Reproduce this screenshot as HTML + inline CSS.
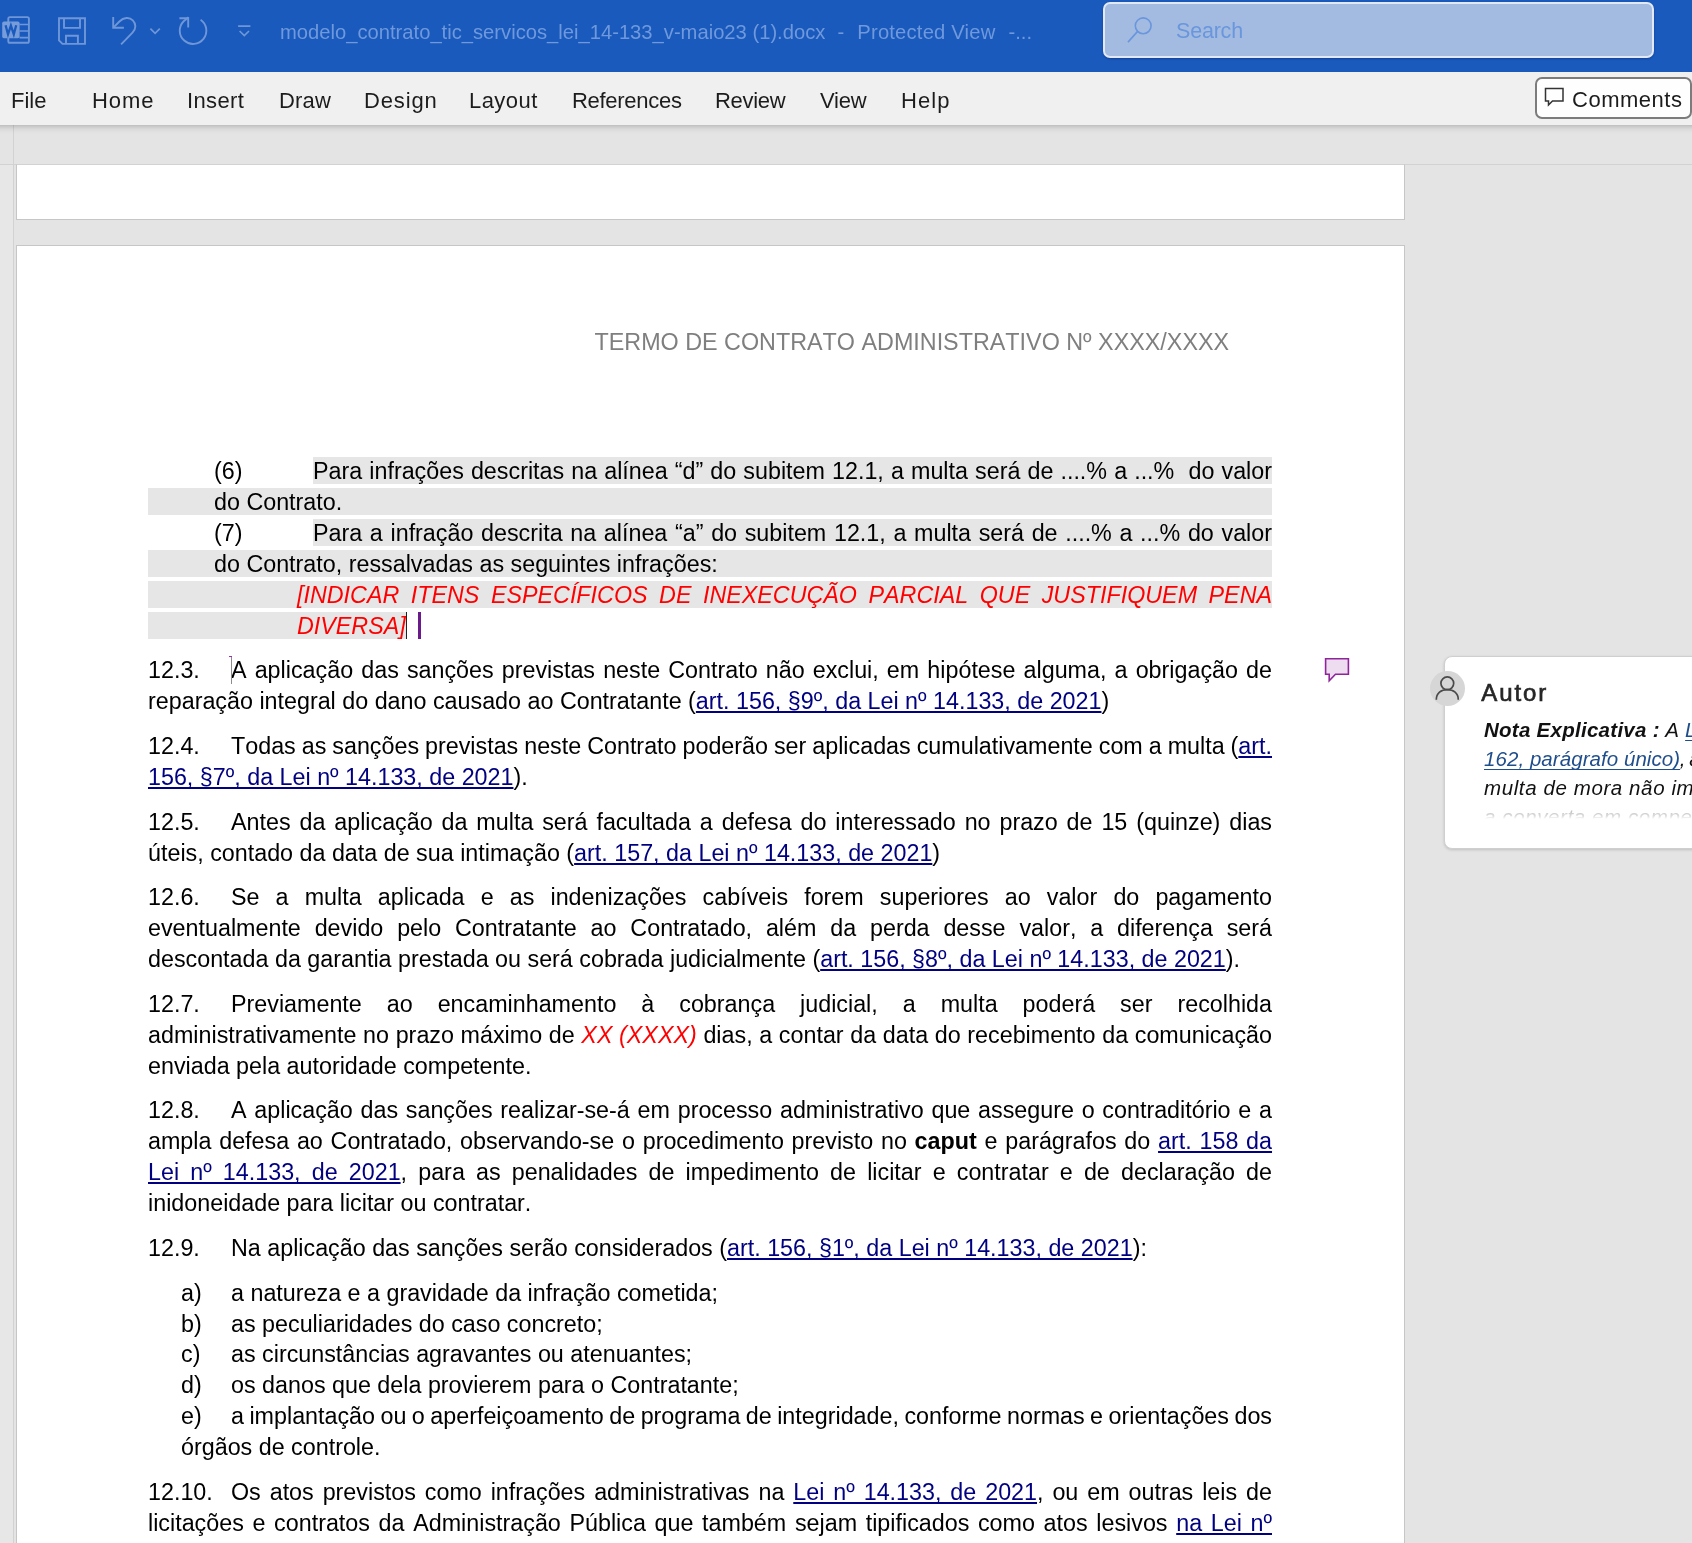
<!DOCTYPE html>
<html lang="pt-BR">
<head>
<meta charset="utf-8">
<title>modelo_contrato_tic_servicos_lei_14-133_v-maio23 (1).docx - Protected View - Word</title>
<style>
*{box-sizing:border-box;margin:0;padding:0}
html,body{width:1692px;height:1543px;overflow:hidden;background:#e4e4e4}
body{position:relative;font-family:"Liberation Sans",sans-serif;color:#000}
/* ---------- title bar ---------- */
#title{will-change:transform;position:absolute;left:0;top:0;width:1692px;height:72px;background:#1a5abd}
#title svg{position:absolute;overflow:visible}
#title .fn{position:absolute;top:17px;height:30px;line-height:30px;font-size:20.2px;color:#6f99dc;white-space:pre}
#search{position:absolute;left:1103px;top:2px;width:551px;height:56px;border-radius:7px;background:#a3bbe1;border:2px solid #e3e9f4;box-shadow:0 1px 2px rgba(0,10,60,.3)}
#search span{position:absolute;left:71px;top:11px;font-size:21.5px;letter-spacing:-.2px;line-height:32px;color:#6996dc}
/* ---------- ribbon ---------- */
#ribbon{position:absolute;left:0;top:72px;width:1692px;height:53px;background:#f0f0f0;z-index:5}
#rshadow{position:absolute;left:0;top:125px;width:1692px;height:11px;z-index:4;background:linear-gradient(to bottom,rgba(0,0,0,.165) 0,rgba(0,0,0,.13) 1px,rgba(0,0,0,.098) 2px,rgba(0,0,0,.07) 3px,rgba(0,0,0,.048) 4px,rgba(0,0,0,.032) 5px,rgba(0,0,0,.02) 6px,rgba(0,0,0,.011) 7px,rgba(0,0,0,.005) 8.500px,rgba(0,0,0,0) 10px)}
#ribbon .tab,#cbtn span{will-change:transform}
#ribbon .tab{position:absolute;top:13px;height:32px;line-height:32px;font-size:22px;color:#1c1c1c;white-space:nowrap}
#cbtn{position:absolute;left:1535px;top:5px;width:157px;height:42px;border:2px solid #7c7c7c;border-radius:7px;background:#fefefe}
#cbtn span{position:absolute;left:35px;top:5px;font-size:22px;letter-spacing:.52px;line-height:32px;color:#1c1c1c}
/* ---------- workspace ---------- */
#ws{position:absolute;left:0;top:125px;width:1692px;height:1418px;background:#e4e4e4}
#vr{position:absolute;left:0;top:164px;width:13px;height:1379px;background:#e7e7e7}
#vline{position:absolute;left:13px;top:125px;width:1px;height:1418px;background:#d2d2d2}
#hline{position:absolute;left:0;top:164px;width:1692px;height:1px;background:#d2d2d2}
.page{position:absolute;left:16px;width:1389px;background:#fff;border:1px solid #c6c6c6}
#p1{top:164px;height:56px;border-top-color:#d2d2d2}
#p2{top:245px;height:1320px}
/* ---------- document text ---------- */
#doc{position:absolute;left:0;top:0;width:1692px;height:1543px;will-change:transform}
.hdr{position:absolute;left:594.5px;top:327px;font-kerning:none;font-size:23.34px;line-height:31px;color:#7f7f7f;white-space:nowrap}
.ln{position:absolute;height:31px;line-height:31px;font-size:23.3px;white-space:pre-wrap;color:#000;font-kerning:none}
.j{text-align:justify;text-align-last:justify;word-spacing:-1.5px}
.t{display:inline-block;text-align:left;white-space:nowrap}
.r{color:#ff0000;font-style:italic}
.ln a{color:#000080;text-decoration:underline;text-decoration-thickness:2px;text-underline-offset:1.6px;text-decoration-skip-ink:none}
.band{position:absolute;height:27px;background:#e6e6e6}
/* ---------- comments ---------- */
#cm{position:absolute;left:0;top:0;width:1692px;height:1543px;will-change:transform}
#card{position:absolute;left:1443.5px;top:656px;width:300px;height:193px;background:#fff;border:1.5px solid #cfcfcf;border-radius:8px;box-shadow:0 1px 3px rgba(0,0,0,.16)}
#avatar{position:absolute;left:1429.5px;top:671px;width:35px;height:35px;border-radius:50%;background:#d6d6d6}
#autor{position:absolute;left:1481.2px;top:677px;font-size:24px;letter-spacing:1.95px;line-height:32px;color:#262626;-webkit-text-stroke:.65px #262626;white-space:nowrap}
.cl{position:absolute;left:1484px;height:29px;line-height:29px;font-size:20.5px;font-style:italic;color:#111;white-space:pre}
.cl a{color:#1f4e8c;text-decoration:underline;text-decoration-thickness:1.4px;text-underline-offset:3px;text-decoration-skip-ink:none}
#fade{position:absolute;left:1470px;top:806px;width:222px;height:36px;background:linear-gradient(to bottom,rgba(255,255,255,.35) 0,rgba(255,255,255,.75) 10px,#fff 13px,#fff 100%)}
</style>
</head>
<body>
<div id="ws"></div>
<div id="vr"></div><div id="vline"></div><div id="hline"></div>
<div class="page" id="p1"></div>
<div class="page" id="p2"></div>

<div id="doc">
<div class="band" style="left:313px;top:457px;width:959px"></div><div class="band" style="left:148px;top:488px;width:1124px"></div><div class="band" style="left:313px;top:519px;width:959px"></div><div class="band" style="left:148px;top:550px;width:1124px"></div><div class="band" style="left:148px;top:581px;width:1124px"></div><div class="band" style="left:148px;top:612px;width:259px"></div>
<div class="hdr">TERMO DE CONTRATO ADMINISTRATIVO Nº XXXX/XXXX</div>
<div class="ln j" style="top:456px;left:214px;width:1058px"><span class="t" style="width:99px">(6)</span>Para infrações descritas na alínea “d” do subitem 12.1, a multa será de ....% a ...%  do valor</div>
<div class="ln" style="top:487px;left:214px;width:1058px">do Contrato.</div>
<div class="ln j" style="top:518px;left:214px;width:1058px"><span class="t" style="width:99px">(7)</span>Para a infração descrita na alínea “a” do subitem 12.1, a multa será de ....% a ...% do valor</div>
<div class="ln" style="top:549px;left:214px;width:1058px">do Contrato, ressalvadas as seguintes infrações:</div>
<div class="ln j r" style="top:580px;left:297px;width:975px">[INDICAR ITENS ESPECÍFICOS DE INEXECUÇÃO PARCIAL QUE JUSTIFIQUEM PENA</div>
<div class="ln r" style="top:611px;left:297px;width:975px">DIVERSA]</div>
<div class="ln j" style="top:655px;left:148px;width:1124px"><span class="t" style="width:83px">12.3.</span>A aplicação das sanções previstas neste Contrato não exclui, em hipótese alguma, a obrigação de</div>
<div class="ln" style="top:686px;left:148px;width:1124px">reparação integral do dano causado ao Contratante (<a>art. 156, §9º, da Lei nº 14.133, de 2021</a>)</div>
<div class="ln j" style="top:731px;left:148px;width:1124px"><span class="t" style="width:83px">12.4.</span>Todas as sanções previstas neste Contrato poderão ser aplicadas cumulativamente com a multa (<a>art.</a></div>
<div class="ln" style="top:762px;left:148px;width:1124px"><a>156, §7º, da Lei nº 14.133, de 2021</a>).</div>
<div class="ln j" style="top:807px;left:148px;width:1124px"><span class="t" style="width:83px">12.5.</span>Antes da aplicação da multa será facultada a defesa do interessado no prazo de 15 (quinze) dias</div>
<div class="ln" style="top:838px;left:148px;width:1124px">úteis, contado da data de sua intimação (<a>art. 157, da Lei nº 14.133, de 2021</a>)</div>
<div class="ln j" style="top:882px;left:148px;width:1124px"><span class="t" style="width:83px">12.6.</span>Se a multa aplicada e as indenizações cabíveis forem superiores ao valor do pagamento</div>
<div class="ln j" style="top:913px;left:148px;width:1124px">eventualmente devido pelo Contratante ao Contratado, além da perda desse valor, a diferença será</div>
<div class="ln" style="top:944px;left:148px;width:1124px">descontada da garantia prestada ou será cobrada judicialmente (<a>art. 156, §8º, da Lei nº 14.133, de 2021</a>).</div>
<div class="ln j" style="top:989px;left:148px;width:1124px"><span class="t" style="width:83px">12.7.</span>Previamente ao encaminhamento à cobrança judicial, a multa poderá ser recolhida</div>
<div class="ln j" style="top:1020px;left:148px;width:1124px">administrativamente no prazo máximo de <i class="r">XX (XXXX)</i> dias, a contar da data do recebimento da comunicação</div>
<div class="ln" style="top:1051px;left:148px;width:1124px">enviada pela autoridade competente.</div>
<div class="ln j" style="top:1095px;left:148px;width:1124px"><span class="t" style="width:83px">12.8.</span>A aplicação das sanções realizar-se-á em processo administrativo que assegure o contraditório e a</div>
<div class="ln j" style="top:1126px;left:148px;width:1124px">ampla defesa ao Contratado, observando-se o procedimento previsto no <b>caput</b> e parágrafos do <a>art. 158 da</a></div>
<div class="ln j" style="top:1157px;left:148px;width:1124px"><a>Lei nº 14.133, de 2021</a>, para as penalidades de impedimento de licitar e contratar e de declaração de</div>
<div class="ln" style="top:1188px;left:148px;width:1124px">inidoneidade para licitar ou contratar.</div>
<div class="ln" style="top:1233px;left:148px;width:1124px"><span class="t" style="width:83px">12.9.</span>Na aplicação das sanções serão considerados (<a>art. 156, §1º, da Lei nº 14.133, de 2021</a>):</div>
<div class="ln" style="top:1278px;left:181px;width:1091px"><span class="t" style="width:50px">a)</span>a natureza e a gravidade da infração cometida;</div>
<div class="ln" style="top:1309px;left:181px;width:1091px"><span class="t" style="width:50px">b)</span>as peculiaridades do caso concreto;</div>
<div class="ln" style="top:1339px;left:181px;width:1091px"><span class="t" style="width:50px">c)</span>as circunstâncias agravantes ou atenuantes;</div>
<div class="ln" style="top:1370px;left:181px;width:1091px"><span class="t" style="width:50px">d)</span>os danos que dela provierem para o Contratante;</div>
<div class="ln j" style="top:1401px;left:181px;width:1091px"><span class="t" style="width:50px">e)</span>a implantação ou o aperfeiçoamento de programa de integridade, conforme normas e orientações dos</div>
<div class="ln" style="top:1432px;left:181px;width:1091px">órgãos de controle.</div>
<div class="ln j" style="top:1477px;left:148px;width:1124px"><span class="t" style="width:83px">12.10.</span>Os atos previstos como infrações administrativas na <a>Lei nº 14.133, de 2021</a>, ou em outras leis de</div>
<div class="ln j" style="top:1508px;left:148px;width:1124px">licitações e contratos da Administração Pública que também sejam tipificados como atos lesivos <a>na Lei nº</a></div>
</div>

<!-- caret + revision bar -->
<div style="position:absolute;left:406px;top:612px;width:1px;height:27px;background:#222"></div>
<div style="position:absolute;left:418px;top:612px;width:3px;height:27px;background:#6b1a8c"></div>
<div style="position:absolute;left:231px;top:657px;width:1px;height:27px;background:#8c8c8c"></div>
<div style="position:absolute;left:229px;top:656px;width:3px;height:1px;background:#9b2fae"></div>

<!-- comment marker in margin -->
<svg style="position:absolute;left:1320px;top:650px" width="40" height="40" viewBox="1320 650 40 40">
  <path d="M1325.600 658.700H1348.400V674.200H1335.500L1329.200 680.700V674.200H1325.600Z" fill="#eedcf0" stroke="#8f259b" stroke-width="1.600" stroke-linejoin="miter"/>
</svg>

<!-- comments pane -->
<div id="cm">
<div id="card"></div>
<div id="avatar"></div>
<svg style="position:absolute;left:1429.5px;top:671px" width="35" height="35" viewBox="0 0 35 35">
  <circle cx="17.3" cy="12.3" r="6.4" fill="none" stroke="#4a4a4a" stroke-width="1.7"/>
  <path d="M6.3 28.8c0-6.6 4.9-10.2 11-10.2s11 3.6 11 10.2" fill="none" stroke="#4a4a4a" stroke-width="1.7"/>
</svg>
<div id="autor">Autor</div>
<div class="cl" style="top:714.5px"><b style="letter-spacing:.27px">Nota Explicativa :</b><span style="letter-spacing:.6px"> A </span><a>Lei nº 14.133, de 2021 (art.</a></div>
<div class="cl" style="top:743.5px"><a style="letter-spacing:.06px">162, parágrafo único)</a><span style="margin-left:-.5px;letter-spacing:-.9px">, </span>ao estabelecer que a aplicação de</div>
<div class="cl" style="top:772.5px;letter-spacing:.6px">multa de mora não impedirá que a Administração</div>
<div class="cl" style="top:801.5px;letter-spacing:.6px;color:#777">a converta em compensatória e promova a extinção</div>
<div id="fade"></div>
</div>

<!-- title bar -->
<div id="title">
  <!-- quick access toolbar icons -->
  <svg style="left:0;top:0" width="270" height="72" viewBox="0 0 270 72" fill="none" stroke="#6f97d8" stroke-width="1.9">
    <!-- Word logo -->
    <rect x="8.300" y="17.100" width="20.600" height="25.700" rx="1.600"/>
    <path d="M19.500 24.500h9.400M19.500 31h9.400M19.500 37.600h9.400" stroke-width="1.700"/>
    <rect x="2.200" y="21.400" width="17.400" height="16.900" rx="1.800" fill="#769cda" stroke="none"/>
    <path d="M5.600 25.300l2.400 9 2.900-8.700 2.900 8.700 2.400-9" stroke="#1a5abd" stroke-width="2.300" stroke-linejoin="miter"/>
    <!-- save -->
    <path d="M59 18.200h26v25.700H62.500L59 40.400z"/>
    <path d="M64 18.200v9.700h16v-9.700"/>
    <path d="M66 43.900v-8.100h11.900v8.100"/>
    <!-- undo -->
    <path d="M113.200 17v10.700h10.700"/>
    <path d="M113.600 27.300l5.800-5.800c4.200-4.200 10-4.600 13.400-1.200 3.400 3.400 3.500 8.600-.3 12.400L121.100 44.300"/>
    <path d="M150.400 28.600l4.700 4.700 4.700-4.700" stroke-width="1.700"/>
    <!-- redo -->
    <path d="M200.600 19.700A13.300 13.300 0 1 1 183.700 21.200L188.500 17.300"/>
    <path d="M179.400 18.200h8.800v9.400"/>
    <!-- customize -->
    <path d="M238.100 26.200h12.300M239.600 31l4.700 4.500 4.700-4.500" stroke-width="1.700"/>
  </svg>
  <div class="fn" style="left:280px">modelo_contrato_tic_servicos_lei_14-133_v-maio23 (1).docx</div>
  <div class="fn" style="left:837.5px">-</div>
  <div class="fn" style="left:857.3px;letter-spacing:.2px">Protected View</div>
  <div class="fn" style="left:1008.5px">-...</div>
  <div id="search">
    <svg style="left:20px;top:8.200px" width="32" height="34" viewBox="0 0 32 34" fill="none" stroke="#6996dc" stroke-width="1.6">
      <circle cx="18.200" cy="13.800" r="7.900"/><path d="M12.600 19.400L3 30.100"/>
    </svg>
    <span>Search</span>
  </div>
</div>

<div id="rshadow"></div>
<!-- ribbon tabs -->
<div id="ribbon">
  <div class="tab" style="left:11px;letter-spacing:0px">File</div>
  <div class="tab" style="left:92px;letter-spacing:0.9px">Home</div>
  <div class="tab" style="left:187px;letter-spacing:0.35px">Insert</div>
  <div class="tab" style="left:279px;letter-spacing:0.2px">Draw</div>
  <div class="tab" style="left:364px;letter-spacing:0.85px">Design</div>
  <div class="tab" style="left:469px;letter-spacing:0.45px">Layout</div>
  <div class="tab" style="left:572px;letter-spacing:-0.29px">References</div>
  <div class="tab" style="left:714.5px;letter-spacing:-0.32px">Review</div>
  <div class="tab" style="left:819.5px;letter-spacing:-0.25px">View</div>
  <div class="tab" style="left:900.5px;letter-spacing:1.05px">Help</div>
  <div id="cbtn">
    <svg style="position:absolute;left:7px;top:8px" width="22" height="22" viewBox="0 0 22 22" fill="none" stroke="#333" stroke-width="1.5">
      <path d="M1.500 1.500h17.500v12.500H8.500L4.500 18v-4H1.500z"/>
    </svg>
    <span>Comments</span>
  </div>
</div>
</body>
</html>
